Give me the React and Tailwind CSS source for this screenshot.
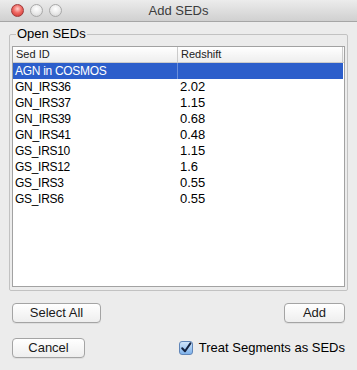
const rows = [
  ['GN_IRS36', '2.02'],
  ['GN_IRS37', '1.15'],
  ['GN_IRS39', '0.68'],
  ['GN_IRS41', '0.48'],
  ['GS_IRS10', '1.15'],
  ['GS_IRS12', '1.6'],
  ['GS_IRS3', '0.55'],
  ['GS_IRS6', '0.55'],
];

function Light({ red }) {
  return red ? (
    <div className="w-[13px] h-[13px] rounded-full border border-[#9e3a3a] bg-[radial-gradient(circle_at_50%_35%,#ffd0cc_0%,#f06a64_45%,#c8302c_100%)]" />
  ) : (
    <div className="w-[13px] h-[13px] rounded-full border border-[#a8a8a8] bg-[radial-gradient(circle_at_50%_35%,#ffffff_0%,#ebebeb_50%,#cdcdcd_100%)]" />
  );
}

function Button({ children, w }) {
  return (
    <button className={`${w} h-[20px] rounded-[4px] border border-[#a4a4a4] bg-gradient-to-b from-[#ffffff] to-[#eeeeee] shadow-[0_1px_0_rgba(0,0,0,0.06)] text-[13px] leading-[18px] text-[#1a1a1a] flex items-center justify-center`}>
      {children}
    </button>
  );
}

export default function App() {
  return (
    <div className="w-[357px] h-[370px] bg-[#ececec] flex flex-col font-['Liberation_Sans',Arial,sans-serif] text-black">
      <div className="h-[22px] shrink-0 grid grid-cols-[1fr_auto_1fr] items-center border-b border-[#a6a6a6] bg-gradient-to-b from-[#ececec] to-[#d0d0d0]">
        <div className="flex items-center gap-[6px] pl-[11px]">
          <Light red />
          <Light />
          <Light />
        </div>
        <div className="text-[13px] leading-[16px] text-[#3c3c3c]">Add SEDs</div>
        <div />
      </div>

      <div className="px-[9px] pt-[4px]">
        <fieldset className="border border-[#c2c2c2] rounded-[2px] px-[2px] pb-[3px]">
          <legend className="ml-[4px] px-[1px] text-[13px] leading-[16px]">Open SEDs</legend>
          <div className="mt-[4px] h-[241px] border border-[#a2a2a2] bg-white flex flex-col">
            <div className="h-[16px] shrink-0 flex border-b border-[#cbcbcb] bg-gradient-to-b from-[#ffffff] to-[#eeeeee] text-[11px] leading-[15px] text-[#222]">
              <div className="w-[165px] pl-[3px] border-r border-[#cbcbcb]">Sed ID</div>
              <div className="flex-1 pl-[3px] mr-[1px] border-r border-[#cbcbcb]">Redshift</div>
            </div>
            <div className="h-[16px] shrink-0 flex bg-[#2c5ecb] mr-[1px] text-white">
              <div className="w-[165px] pl-[2px] border-r border-[#6b8fda] text-[12px] tracking-[-0.3px] leading-[16px]">AGN in COSMOS</div>
              <div className="flex-1" />
            </div>
            {rows.map(([id, z]) => (
              <div key={id} className="h-[16px] shrink-0 flex">
                <div className="w-[165px] pl-[2px] text-[12px] tracking-[-0.3px] leading-[16px]">{id}</div>
                <div className="flex-1 pl-[2px] text-[13px] leading-[16px]">{z}</div>
              </div>
            ))}
          </div>
        </fieldset>
      </div>

      <div className="mt-[12px] px-[12px] flex justify-between">
        <Button w="w-[89px]">Select All</Button>
        <Button w="w-[61px]">Add</Button>
      </div>

      <div className="mt-[15px] px-[12px] flex justify-between items-center">
        <Button w="w-[73px]">Cancel</Button>
        <div className="flex items-center gap-[6px]">
          <div className="w-[14px] h-[14px] rounded-[3px] border border-[#5f85b8] bg-gradient-to-b from-[#cfe4fa] to-[#7fb2ea] flex items-center justify-center">
            <svg width="12" height="12" viewBox="0 0 12 12">
              <path d="M2.2 6.2 L5 9.2 L10.4 1.4" fill="none" stroke="#14223f" strokeWidth="2" strokeLinecap="round" strokeLinejoin="round" />
            </svg>
          </div>
          <span className="text-[13px] leading-[16px]">Treat Segments as SEDs</span>
        </div>
      </div>
    </div>
  );
}
